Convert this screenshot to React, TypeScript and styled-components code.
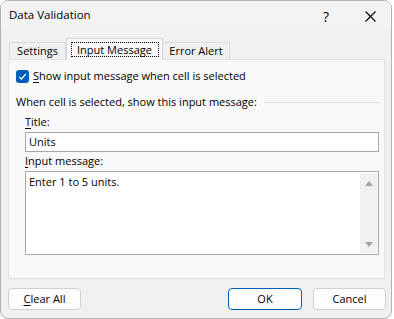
import React from "react"
import styled, { createGlobalStyle, css } from "styled-components"

const GlobalStyle = createGlobalStyle`
  html, body {
    margin: 0;
    padding: 0;
    background: #ffffff;
  }
  body {
    font-family: "Open Sans", "Noto Sans", sans-serif;
    font-size: 11px;
    color: #000000;
  }
`

const Window = styled.div`
  box-sizing: border-box;
  width: 392px;
  height: 319px;
  border: 1px solid #b4b4b4;
  border-radius: 8px;
  background: #f0f0f0;
  overflow: hidden;
  display: flex;
  flex-direction: column;
`

const TitleBar = styled.div`
  height: 30px;
  display: flex;
  align-items: center;
  background: #f3f3f3;
  padding-left: 8px;
`

const Title = styled.div`
  flex: 1;
  align-self: flex-start;
  padding-top: 6px;
  font-size: 11.5px;
  line-height: 16px;
`

const TitleButton = styled.div<{ $w: number }>`
  width: ${({ $w }) => $w}px;
  height: 30px;
  display: flex;
  align-items: center;
  justify-content: center;
  font-size: 14px;
`

const Body = styled.div`
  flex: 1;
  display: flex;
  flex-direction: column;
  padding: 7px 5px 0 7px;
`

const Tabs = styled.div`
  display: flex;
  align-items: flex-start;
  height: 22px;
  padding-left: 1px;
  position: relative;
  z-index: 1;
  margin-bottom: -1px;
`

const Tab = styled.div<{ $w: number }>`
  box-sizing: border-box;
  width: ${({ $w }) => $w}px;
  height: 17px;
  margin-top: 4px;
  display: flex;
  align-items: center;
  justify-content: center;
  border: 1px solid #dadada;
  border-bottom: none;
  background: #f0f0f0;
  line-height: 16px;
`

const ActiveTab = styled.div<{ $w: number }>`
  box-sizing: border-box;
  width: ${({ $w }) => $w}px;
  height: 22px;
  display: flex;
  justify-content: center;
  padding-top: 3px;
  border: 1px solid #d6d6d6;
  border-bottom: none;
  background: #f9f9f9;
  margin-right: -1px;
  position: relative;
  z-index: 1;
`

const FocusLabel = styled.span`
  box-sizing: border-box;
  height: 15px;
  width: 88px;
  border: 1px dotted #000000;
  line-height: 13px;
  text-align: center;
`

const Panel = styled.div`
  box-sizing: border-box;
  width: 377px;
  height: 220px;
  border: 1px solid #e2e2e2;
  background: #f9f9f9;
  padding: 8px 5px 0 7px;
`

const CheckRow = styled.div`
  display: flex;
  align-items: center;
  gap: 4px;
  height: 16px;
  line-height: 16px;
`

const Check = styled.div`
  width: 13px;
  height: 13px;
  border-radius: 3px;
  background: #005fb8;
  display: flex;
  align-items: center;
  justify-content: center;
`

const GroupRow = styled.div`
  display: flex;
  margin-top: 10px;
  height: 16px;
  line-height: 16px;
`

const GroupLine = styled.div`
  flex: 1;
  height: 1px;
  background: #dcdcdc;
  margin: 8px 0 0 7px;
`

const Field = styled.div`
  margin-left: 9px;
  width: 354px;
`

const Label = styled.div<{ $gap: number }>`
  margin-top: ${({ $gap }) => $gap}px;
  height: 16px;
  line-height: 16px;
`

const Mn = styled.span`
  text-decoration: underline;
  text-underline-offset: 2px;
`

const TextBox = styled.div`
  box-sizing: border-box;
  margin-top: 2px;
  height: 20px;
  border: 1px solid #a7a7a7;
  background: #ffffff;
  padding: 0 3px;
  line-height: 18px;
`

const TextArea = styled.div`
  box-sizing: border-box;
  margin-top: 2px;
  height: 84px;
  border: 1px solid #a7a7a7;
  background: #ffffff;
  display: flex;
  padding: 1px;
`

const AreaText = styled.div`
  flex: 1;
  padding: 1px 2px;
  line-height: 16px;
`

const ScrollBar = styled.div`
  box-sizing: border-box;
  width: 17px;
  background: #f0f0f0;
  display: flex;
  flex-direction: column;
  justify-content: space-between;
  align-items: center;
  padding: 8px 0 6px;
`

const Footer = styled.div`
  display: flex;
  align-items: center;
  margin-top: 9px;
`

const Button = styled.div<{ $primary?: boolean }>`
  box-sizing: border-box;
  width: 73px;
  height: 22px;
  border: 1px solid #d0d0d0;
  border-radius: 4px;
  background: #fdfdfd;
  display: flex;
  align-items: center;
  justify-content: center;
  line-height: 16px;
  ${({ $primary }) =>
    $primary &&
    css`
      border-color: #005fb8;
      width: 74px;
    `}
`

const Spacer = styled.div`
  flex: 1;
`

const ButtonGap = styled.div`
  width: 11px;
`

export default function App() {
  return (
    <>
      <GlobalStyle />
      <Window>
        <TitleBar>
          <Title>Data Validation</Title>
          <TitleButton $w={46}>?</TitleButton>
          <TitleButton $w={42}>
            <svg width="11" height="11" viewBox="0 0 11 11">
              <path d="M0.5 0.5 L10.5 10.5 M10.5 0.5 L0.5 10.5" stroke="#000" strokeWidth="1.1" />
            </svg>
          </TitleButton>
        </TitleBar>
        <Body>
          <Tabs>
            <Tab $w={57}>Settings</Tab>
            <ActiveTab $w={97}>
              <FocusLabel>Input Message</FocusLabel>
            </ActiveTab>
            <Tab $w={68}>Error Alert</Tab>
          </Tabs>
          <Panel>
            <CheckRow>
              <Check>
                <svg width="9" height="9" viewBox="0 0 9 9">
                  <path d="M1.2 4.8 L3.4 7 L7.8 2" stroke="#fff" strokeWidth="1.2" fill="none" />
                </svg>
              </Check>
              <span>
                <Mn>S</Mn>how input message when cell is selected
              </span>
            </CheckRow>
            <GroupRow>
              <span>When cell is selected, show this input message:</span>
              <GroupLine />
            </GroupRow>
            <Field>
              <Label $gap={4}>
                <Mn>T</Mn>itle:
              </Label>
              <TextBox>Units</TextBox>
              <Label $gap={1}>
                <Mn>I</Mn>nput message:
              </Label>
              <TextArea>
                <AreaText>Enter 1 to 5 units.</AreaText>
                <ScrollBar>
                  <svg width="8" height="5" viewBox="0 0 8 5">
                    <path d="M0 5 L4 0 L8 5 Z" fill="#a3a3a3" />
                  </svg>
                  <svg width="8" height="5" viewBox="0 0 8 5">
                    <path d="M0 0 L4 5 L8 0 Z" fill="#a3a3a3" />
                  </svg>
                </ScrollBar>
              </TextArea>
            </Field>
          </Panel>
          <Footer>
            <Button>
              <span>
                <Mn>C</Mn>lear All
              </span>
            </Button>
            <Spacer />
            <Button $primary>OK</Button>
            <ButtonGap />
            <Button>Cancel</Button>
          </Footer>
        </Body>
      </Window>
    </>
  )
}
